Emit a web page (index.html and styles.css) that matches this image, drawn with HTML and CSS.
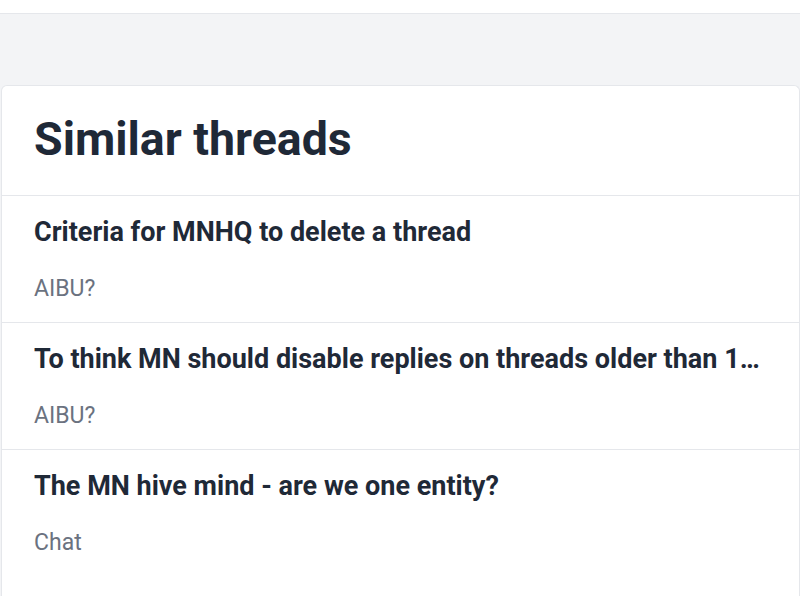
FILE: index.html
```html
<!DOCTYPE html>
<html lang="en">
<head>
    <meta charset="UTF-8">
    <meta name="viewport" content="width=device-width, initial-scale=1.0">
    <title>Similar threads</title>
    <link rel="stylesheet" href="styles.css">
</head>
<body>
    <div class="topbar"></div>

    <div class="page">
        <!-- Related discussions box -->
        <div class="card">
            <h2 class="card-title">Similar threads</h2>
            <ul class="threads">
                <li class="thread">
                    <a class="thread-title" href="#">Criteria for MNHQ to delete a thread</a>
                    <span class="thread-topic">AIBU?</span>
                </li>
                <li class="thread">
                    <a class="thread-title" href="#">To think MN should disable replies on threads older than 12 months</a>
                    <span class="thread-topic">AIBU?</span>
                </li>
                <li class="thread">
                    <a class="thread-title" href="#">The MN hive mind - are we one entity?</a>
                    <span class="thread-topic">Chat</span>
                </li>
            </ul>
        </div>
    </div>
</body>
</html>
```

FILE: styles.css
```css
body {
    margin: 0;
    padding: 0;
    font-family: Roboto, "Liberation Sans", sans-serif;
    background-color: #fff;
    color: #1f2937;
}
.topbar {
    height: 13px;
    border-bottom: 1px solid #e5e7eb;
    background-color: #fff;
}
.page {
    background-color: #f3f4f6;
    padding: 71px 0 0 1px;
}
.card {
    background-color: #fff;
    border: 1px solid #e5e7eb;
    border-bottom: none;
    border-radius: 6px 6px 0 0;
    padding-bottom: 20px;
}
.card-title {
    margin: 0;
    padding: 26px 32px 29px;
    font-size: 46.5px;
    line-height: 54px;
    font-weight: 700;
    color: #1f2937;
    border-bottom: 1px solid #e5e7eb;
}
.threads {
    list-style: none;
    margin: 0;
    padding: 0;
}
.thread {
    display: flex;
    flex-direction: column;
    gap: 27px;
    padding: 20px 32px 19px;
    border-bottom: 1px solid #e5e7eb;
}
.thread:last-child {
    border-bottom: none;
}
.thread-title {
    font-size: 27px;
    line-height: 32px;
    font-weight: 700;
    color: #1f2937;
    text-decoration: none;
    white-space: nowrap;
    overflow: hidden;
    text-overflow: ellipsis;
}
.thread-topic {
    font-size: 23px;
    line-height: 28px;
    color: #6b7280;
}
```
